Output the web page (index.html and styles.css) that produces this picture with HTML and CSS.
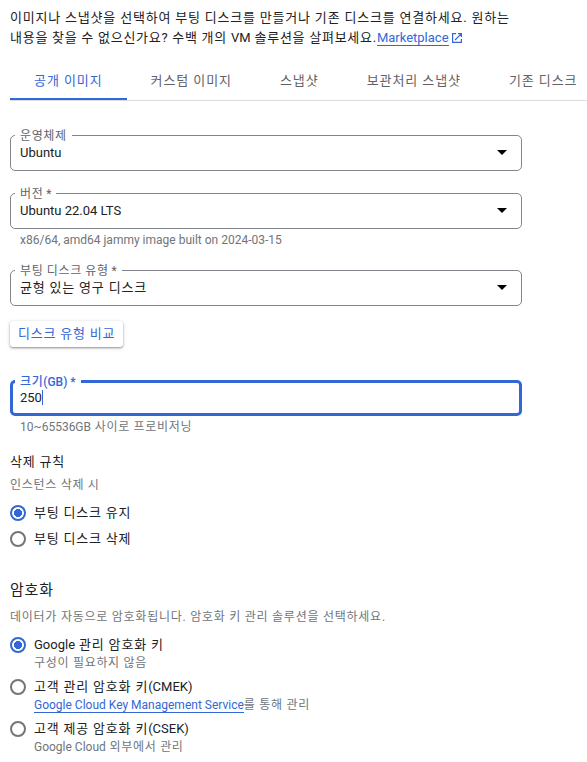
FILE: index.html
```html
<!doctype html>
<html lang="ko">
    <head>
        <meta charset="UTF-8" />
        <meta name="viewport" content="width=device-width, initial-scale=1.0" />
        <title>부팅 디스크</title>
        <link rel="stylesheet" href="styles.css">
    </head>
    <body>
        <div class="container">
            <p class="intro">
                이미지나 스냅샷을 선택하여 부팅 디스크를 만들거나 기존 디스크를 연결하세요. 원하는<br />
                <span class="tight">내용을 찾을 수 없으신가요? 수백 개의 <span class="latin">VM</span> 솔루션을 살펴보세요.</span><a class="link latin" href="#">Marketplace</a>
                <svg class="external" viewBox="0 0 10 10" width="10" height="10">
                    <path d="M4 .6H.6v8.8h8.8V6M6 .6h3.4V4M9.2.8L3 7" fill="none" stroke="currentColor" stroke-width="1.2" />
                </svg>
            </p>

            <div class="tabs">
                <a class="tab active">공개 이미지</a>
                <a class="tab">커스텀 이미지</a>
                <a class="tab">스냅샷</a>
                <a class="tab">보관처리 스냅샷</a>
                <a class="tab">기존 디스크</a>
            </div>

            <fieldset class="field">
                <legend>운영체제</legend>
                <div class="value"><span class="latin">Ubuntu</span><i class="arrow"></i></div>
            </fieldset>

            <fieldset class="field field-version">
                <legend>버전<span class="latin"> *</span></legend>
                <div class="value"><span class="latin">Ubuntu 22.04 LTS</span><i class="arrow"></i></div>
            </fieldset>
            <div class="hint latin">x86/64, amd64 jammy image built on 2024-03-15</div>

            <fieldset class="field field-type">
                <legend>부팅 디스크 유형<span class="latin"> *</span></legend>
                <div class="value"><span class="korean">균형 있는 영구 디스크</span><i class="arrow"></i></div>
            </fieldset>

            <button class="button">디스크 유형 비교</button>

            <fieldset class="field focused">
                <legend>크기<span class="latin">(GB) *</span></legend>
                <div class="value"><span class="latin">250</span><i class="caret"></i></div>
            </fieldset>
            <div class="hint"><span class="latin">10~65536GB</span> 사이로 프로비저닝</div>

            <h3>삭제 규칙</h3>
            <p class="description">인스턴스 삭제 시</p>
            <div class="option">
                <span class="radio checked"></span>
                <div class="option-label">부팅 디스크 유지</div>
            </div>
            <div class="option">
                <span class="radio"></span>
                <div class="option-label">부팅 디스크 삭제</div>
            </div>

            <h2>암호화</h2>
            <p class="description">데이터가 자동으로 암호화됩니다. 암호화 키 관리 솔루션을 선택하세요.</p>
            <div class="option option-tall">
                <span class="radio checked"></span>
                <div class="option-label">
                    <span class="latin">Google</span> 관리 암호화 키
                    <div class="option-note">구성이 필요하지 않음</div>
                </div>
            </div>
            <div class="option option-tall">
                <span class="radio"></span>
                <div class="option-label">
                    고객 관리 암호화 키<span class="latin">(CMEK)</span>
                    <div class="option-note"><a class="link latin" href="#">Google Cloud Key Management Service</a>를 통해 관리</div>
                </div>
            </div>
            <div class="option option-tall">
                <span class="radio"></span>
                <div class="option-label">
                    고객 제공 암호화 키<span class="latin">(CSEK)</span>
                    <div class="option-note"><span class="latin">Google Cloud</span> 외부에서 관리</div>
                </div>
            </div>
        </div>
    </body>
</html>
```
FILE: styles.css
```css
body {
    margin: 0;
    background: #fff;
    color: #202124;
    font-family: Roboto, "Noto Sans CJK KR", sans-serif;
    font-size: 13px;
    line-height: 20px;
    letter-spacing: 0.8px;
    white-space: nowrap;
    overflow: hidden;
}
.container {
    padding: 8px 0 0 10px;
}
.latin {
    letter-spacing: 0;
}
.tight {
    letter-spacing: 0.73px;
}
p,
h2,
h3 {
    margin: 0;
    font-weight: 400;
}
.link {
    color: #3367d6;
    text-decoration: none;
    border-bottom: 1px solid #3367d6;
}
.external {
    color: #3367d6;
    margin-left: -1px;
    vertical-align: -1px;
}
.tabs {
    display: flex;
    height: 40px;
    margin-top: 12px;
    border-bottom: 1px solid #dadce0;
}
.tab {
    padding: 0 24px;
    line-height: 42px;
    letter-spacing: 0.92px;
    color: #5f6368;
}
.tab.active {
    color: #3367d6;
    box-shadow: inset 0 -2px #3367d6;
}
.field {
    box-sizing: border-box;
    width: 512px;
    height: 42px;
    margin: 28px 0 0;
    padding: 0 14px 0 9px;
    border: 1px solid #80868b;
    border-radius: 5px;
}
.field legend {
    height: 13px;
    margin-left: -5px;
    padding: 0 5px;
    font-size: 12px;
    line-height: 15px;
    letter-spacing: 0.6px;
    color: #5f6368;
}
.field legend .latin {
    letter-spacing: 0;
}
.field-version {
    margin-top: 16px;
}
.field-type {
    margin-top: 15px;
}
.value {
    display: flex;
    align-items: center;
    height: 21px;
}
.korean {
    letter-spacing: 0.8px;
}
.arrow {
    margin-left: auto;
    border: 5px solid transparent;
    border-top-color: #000;
    border-bottom: 0;
}
.hint {
    margin: 2px 0 0 10px;
    font-size: 12px;
    line-height: 18px;
    letter-spacing: 0.7px;
    color: #70757a;
}
.hint.latin {
    letter-spacing: 0;
}
.button {
    display: block;
    height: 26px;
    margin-top: 15px;
    padding: 0 8px 1px;
    border: none;
    border-radius: 3px;
    background: #fff;
    box-shadow: 0 1px 2px rgba(0, 0, 0, 0.35), 0 1px 4px rgba(0, 0, 0, 0.15);
    color: #3367d6;
    font: inherit;
    letter-spacing: 0.8px;
}
.focused {
    height: 41px;
    padding-left: 7px;
    border: 3px solid #3367d6;
}
.focused legend {
    color: #3367d6;
    font-weight: 500;
}
.focused .value {
    height: 19px;
}
.caret {
    width: 1px;
    height: 15px;
    background: #3367d6;
}
h3 {
    margin-top: 16px;
    font-size: 13px;
}
.description {
    margin-top: 3px;
    font-size: 12px;
    letter-spacing: 0.7px;
    color: #70757a;
}
.option {
    display: flex;
    gap: 8px;
    height: 26px;
    line-height: 19px;
}
.description + .option {
    margin-top: 8px;
}
.radio {
    box-sizing: border-box;
    width: 16px;
    height: 16px;
    margin-top: 2px;
    border: 2px solid #757575;
    border-radius: 50%;
}
.radio.checked {
    border-color: #3367d6;
    background: radial-gradient(circle, #3367d6 3.8px, #fff 4.3px);
}
h2 {
    margin-top: 25px;
    font-size: 15px;
}
h2 + .description {
    margin-top: 7px;
    letter-spacing: 0.75px;
}
.option-tall {
    height: 42px;
    line-height: 20px;
}
.option-note {
    font-size: 12px;
    line-height: 16px;
    letter-spacing: 0.7px;
    color: #70757a;
}
```
